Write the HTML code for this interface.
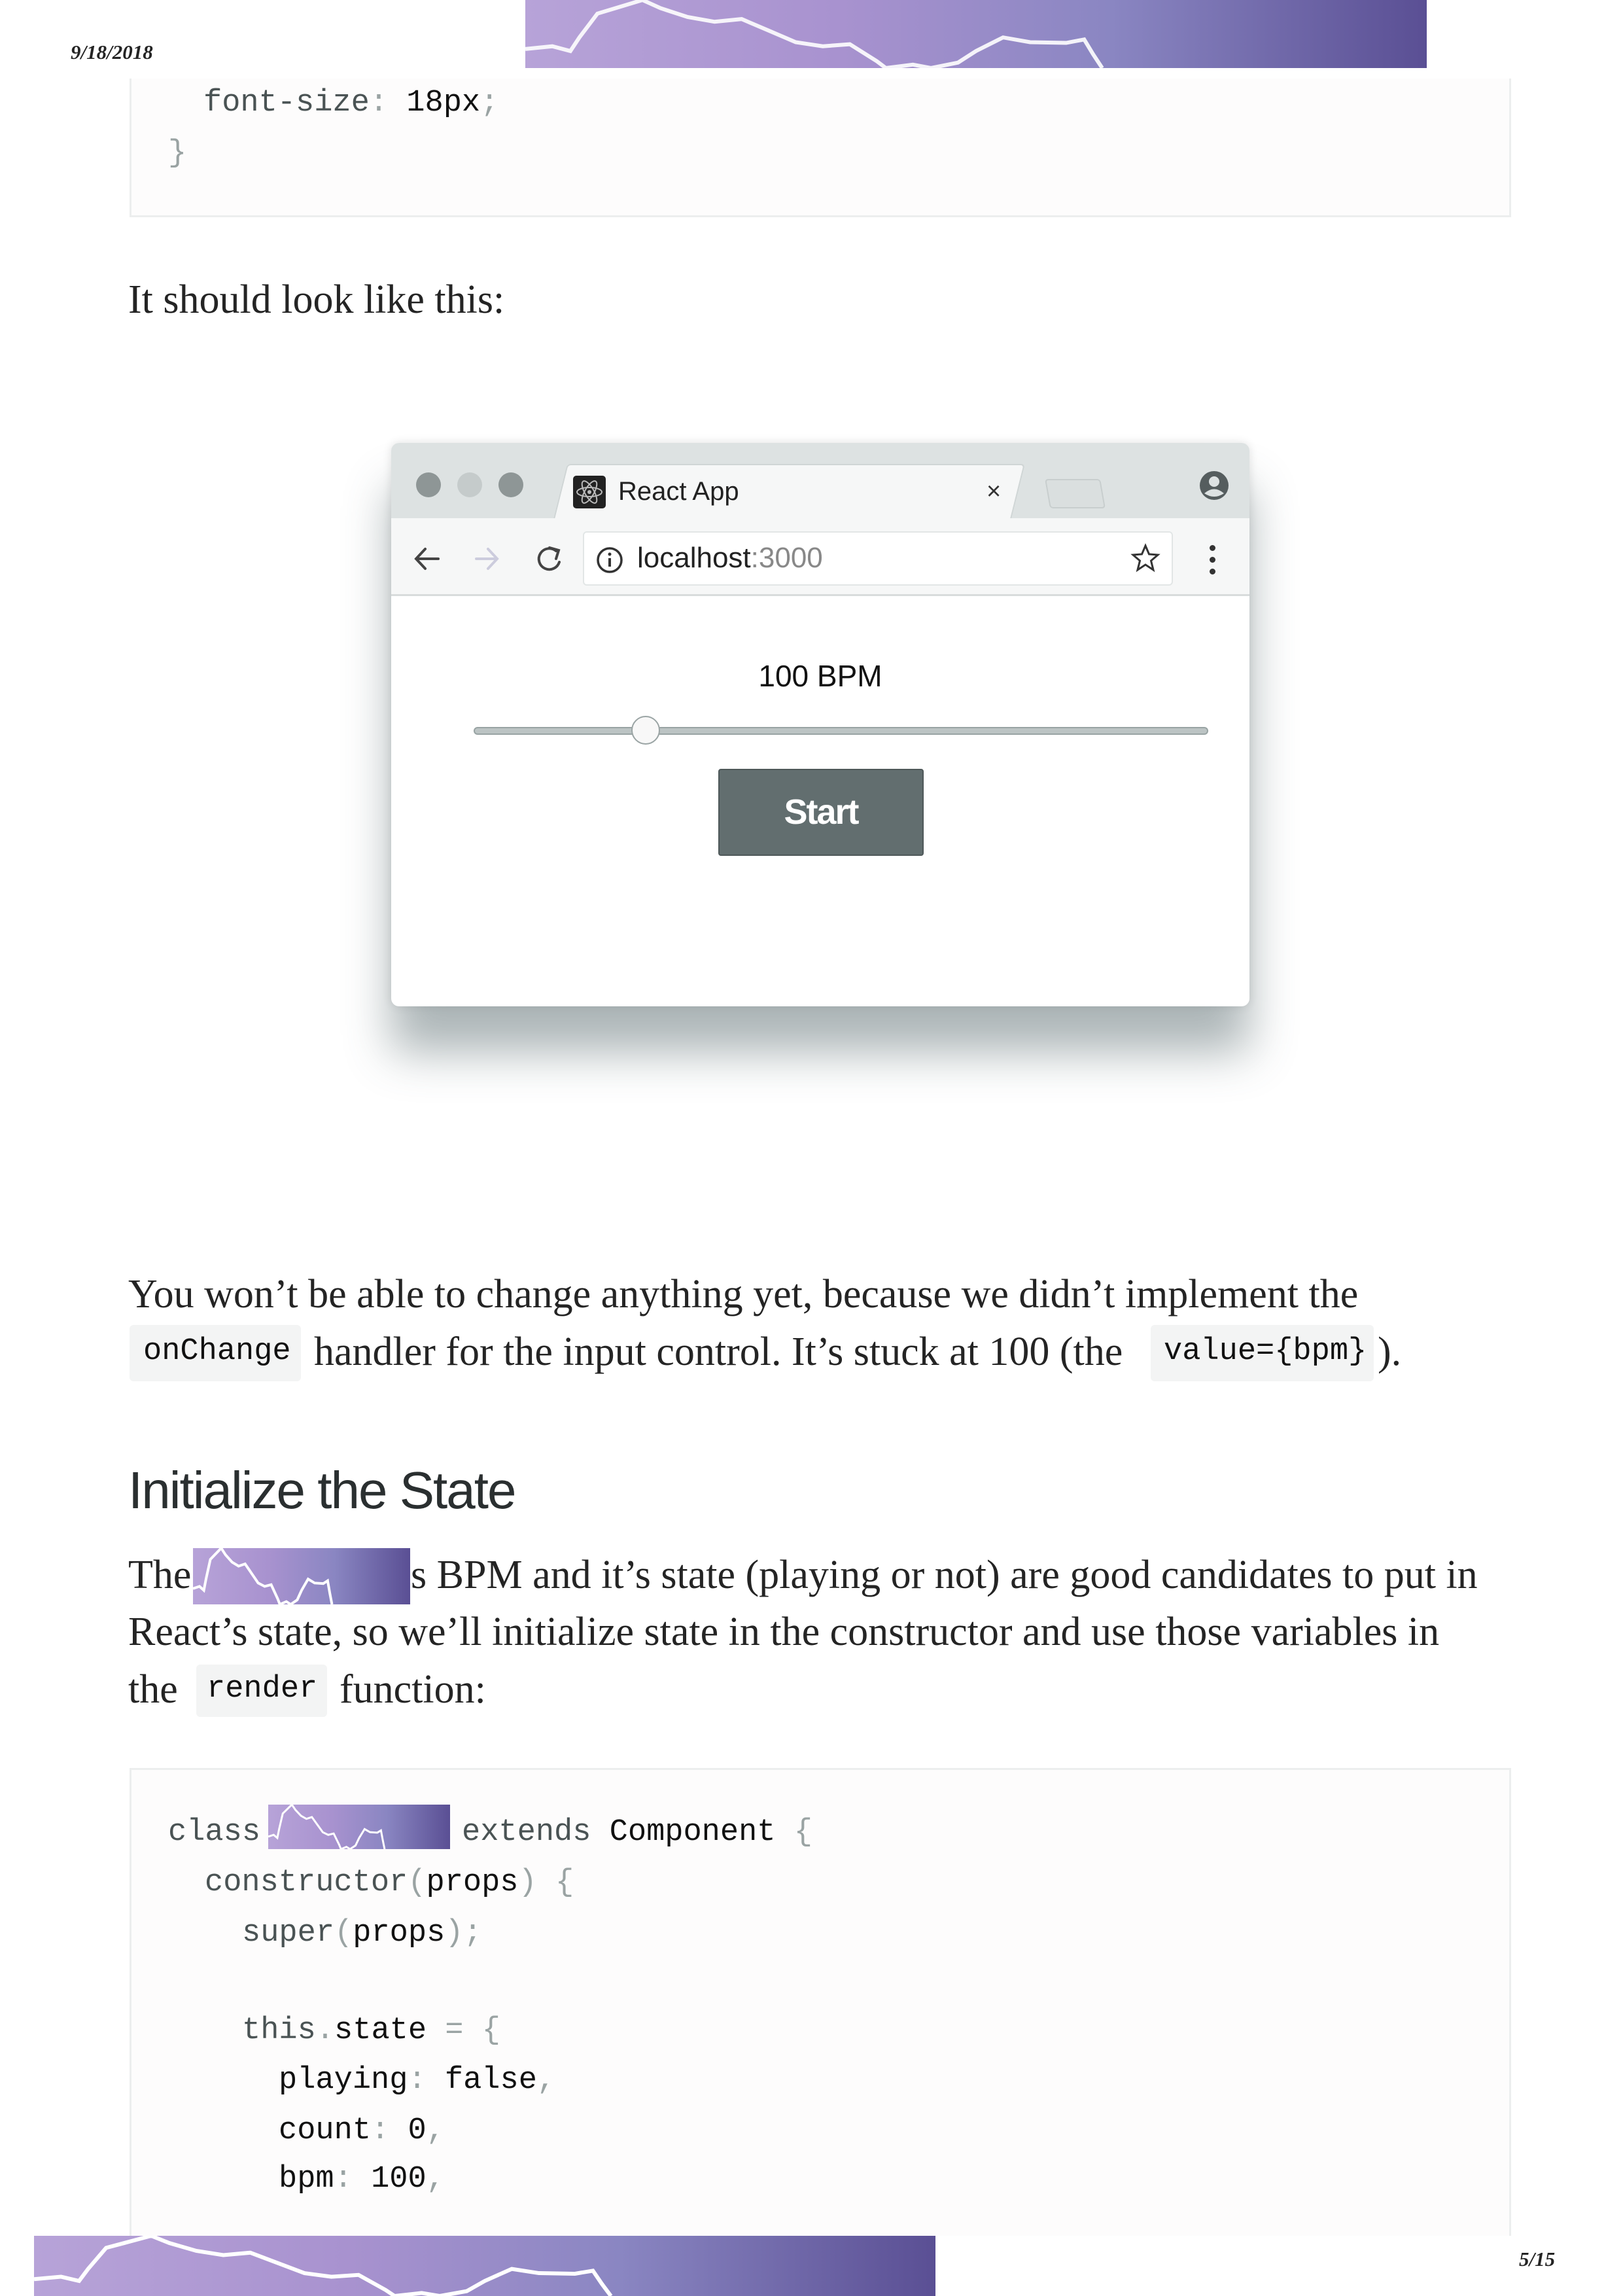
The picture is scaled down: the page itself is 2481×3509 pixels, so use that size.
<!DOCTYPE html>
<html><head><meta charset="utf-8"><style>
*{margin:0;padding:0;box-sizing:border-box}
html,body{width:2481px;height:3509px;overflow:hidden}
body{position:relative;background:#fff;font-family:"Liberation Serif",serif;color:#242424}
.a{position:absolute;white-space:nowrap;height:80px;line-height:80px}
.s{font-size:62px}
.m{font-family:"Liberation Mono",monospace;font-size:47px}
.k{color:#4a5354}.p{color:#9aa3a3}.b{color:#111}
.ic{position:absolute;background:#f3f4f4;border-radius:6px}
.ban{position:absolute;background:linear-gradient(90deg,#b7a3d8 0%,#a892cf 35%,#8a86c2 65%,#5a4f94 100%);overflow:hidden}
.ban svg{position:absolute;left:0;top:0;width:100%;height:100%}
</style></head><body>

<div class="ban" style="left:803px;top:0;width:1378px;height:104px"><svg viewBox="0 0 100 100" preserveAspectRatio="none"><polyline points="0,72 3,68 5,75 6,55 8,20 10,12 13,0 15,12 18,25 21,32 24,28 27,45 30,62 33,68 36,65 39,90 40,100 43,95 45,100 48,92 50,75 53,55 56,62 60,63 62,58 63,80 64,100" fill="none" stroke="#fff" vector-effect="non-scaling-stroke" style="stroke-width:6px;opacity:.9"/></svg></div>
<div class="a" style="left:108px;top:55px;font-size:31px;font-style:italic;font-weight:bold;height:50px;line-height:50px">9/18/2018</div>

<div style="position:absolute;left:198px;top:120px;width:2112px;height:212px;background:#fdfcfc;border:3px solid #eceeee;border-top:none"></div>
<div class="a m" style="left:311px;top:118px"><span class="k">font-size</span><span class="p">:</span> <span class="b">18px</span><span class="p">;</span></div>
<div class="a m p" style="left:257px;top:195px">}</div>

<div class="a s" style="left:196px;top:418px">It should look like this:</div>

<!-- browser -->
<div style="position:absolute;left:598px;top:677px;width:1312px;height:861px;border-radius:12px;background:#fff;box-shadow:0 70px 70px rgba(70,90,95,.45),0 0 14px rgba(0,0,0,.12);overflow:hidden">
 <div style="position:absolute;left:0;top:0;width:1312px;height:117px;background:#dde2e2"></div>
 <div style="position:absolute;left:0;top:117px;width:1312px;height:117px;background:#f6f7f7;border-bottom:3px solid #d8dcdc"></div>
 <div style="position:absolute;left:248px;top:32px;width:700px;height:88px;background:#f6f7f7;transform:skewX(-14deg) translateX(10px);border:2px solid #cfd5d5;border-bottom:none;border-radius:6px 6px 0 0"></div>
 <div style="position:absolute;left:0;top:115px;width:1312px;height:6px;background:#f6f7f7"></div>
 <div style="position:absolute;left:1003px;top:55px;width:85px;height:45px;background:#dadfdf;border:2px solid #c8cece;transform:skewX(10deg);border-radius:5px"></div>
 <div style="position:absolute;left:38px;top:45px;width:38px;height:38px;border-radius:50%;background:#8e9696"></div>
 <div style="position:absolute;left:101px;top:45px;width:38px;height:38px;border-radius:50%;background:#c5cbcb"></div>
 <div style="position:absolute;left:164px;top:45px;width:38px;height:38px;border-radius:50%;background:#8e9696"></div>
 <div style="position:absolute;left:278px;top:50px;width:50px;height:50px;border-radius:5px;background:#222"><svg viewBox="0 0 50 50" width="50" height="50"><g fill="none" stroke="#bbb" stroke-width="2"><ellipse cx="25" cy="25" rx="19" ry="7"/><ellipse cx="25" cy="25" rx="19" ry="7" transform="rotate(60 25 25)"/><ellipse cx="25" cy="25" rx="19" ry="7" transform="rotate(-60 25 25)"/></g><circle cx="25" cy="25" r="3" fill="#bbb"/></svg></div>
 <div class="a" style="left:347px;top:34px;font-family:'Liberation Sans',sans-serif;font-size:40px;color:#222">React App</div>
 <div class="a" style="left:910px;top:34px;font-family:'Liberation Sans',sans-serif;font-size:38px;color:#333">×</div>
 <svg style="position:absolute;left:1233px;top:40px" width="50" height="50" viewBox="0 0 50 50"><circle cx="25" cy="25" r="22" fill="#555d5e"/><circle cx="25" cy="19" r="8" fill="#dde2e2"/><path d="M10 37 Q25 24 40 37 Q25 47 10 37Z" fill="#dde2e2"/></svg>
 <svg style="position:absolute;left:30px;top:152px" width="320" height="50" viewBox="0 0 320 50"><g fill="none" stroke-width="4" stroke-linecap="round"><path d="M42 25H8M22 10L8 25L22 40" stroke="#444"/><path d="M132 25H100M118 10L132 25L118 40" stroke="#ccd"/><path d="M222 13A16 16 0 1 0 227 30" stroke="#444"/><path d="M212 8L226 12L222 25" stroke="#444"/></g></svg>
 <div style="position:absolute;left:293px;top:135px;width:902px;height:83px;background:#fff;border:2px solid #e2e6e6;border-radius:6px"></div>
 <svg style="position:absolute;left:312px;top:157px" width="44" height="44" viewBox="0 0 44 44"><circle cx="22" cy="22" r="18" fill="none" stroke="#333" stroke-width="3.5"/><rect x="20" y="19" width="4" height="13" fill="#333"/><circle cx="22" cy="13" r="2.5" fill="#333"/></svg>
 <div class="a" style="left:376px;top:136px;font-family:'Liberation Sans',sans-serif;font-size:44px;color:#222">localhost<span style="color:#888">:3000</span></div>
 <svg style="position:absolute;left:1130px;top:153px" width="46" height="46" viewBox="0 0 46 46"><path d="M23 4L28.5 17L42 18L31.5 27L35 41L23 33L11 41L14.5 27L4 18L17.5 17Z" fill="none" stroke="#333" stroke-width="3"/></svg>
 <div style="position:absolute;left:1251px;top:156px;width:9px;height:9px;border-radius:50%;background:#333;box-shadow:0 18px 0 #333,0 36px 0 #333"></div>
 <div class="a" style="left:0;width:1312px;text-align:center;top:316px;font-family:'Liberation Sans',sans-serif;font-size:46px;color:#111">100 BPM</div>
 <div style="position:absolute;left:126px;top:434px;width:1123px;height:12px;border-radius:6px;background:#bcc4c4;border:2px solid #98a3a3"></div>
 <div style="position:absolute;left:367px;top:417px;width:44px;height:44px;border-radius:50%;background:#f8f8f8;border:2px solid #9aa4a4"></div>
 <div style="position:absolute;left:500px;top:498px;width:314px;height:133px;background:#626e6f;border:2px solid #4e5859;border-radius:4px;color:#fff;font-family:'Liberation Sans',sans-serif;font-size:54px;font-weight:bold;letter-spacing:-2px;text-align:center;line-height:129px">Start</div>
</div>

<div class="a s" style="left:196px;top:1938px">You won’t be able to change anything yet, because we didn’t implement the</div>
<div class="ic" style="left:198px;top:2025px;width:262px;height:86px"></div>
<div class="a m b" style="left:219px;top:2026px">onChange</div>
<div class="a s" style="left:480px;top:2026px">handler for the input control. It’s stuck at 100 (the</div>
<div class="ic" style="left:1759px;top:2025px;width:341px;height:86px"></div>
<div class="a m b" style="left:1779px;top:2026px">value={bpm}</div>
<div class="a s" style="left:2106px;top:2026px">).</div>

<div class="a" style="left:196px;top:2233px;height:90px;line-height:90px;font-family:'Liberation Sans',sans-serif;font-size:80px;color:#2a2f30;letter-spacing:-2px">Initialize the State</div>

<div class="a s" style="left:196px;top:2367px">The</div>
<div class="a s" style="left:628px;top:2367px">s BPM and it’s state (playing or not) are good candidates to put in</div>
<div class="ban" style="left:295px;top:2366px;width:332px;height:86px"><svg viewBox="0 0 100 100" preserveAspectRatio="none"><polyline points="0,72 3,68 5,75 6,55 8,20 10,12 13,0 15,12 18,25 21,32 24,28 27,45 30,62 33,68 36,65 39,90 40,100 43,95 45,100 48,92 50,75 53,55 56,62 60,63 62,58 63,80 64,100" fill="none" stroke="#fff" vector-effect="non-scaling-stroke" style="stroke-width:4px"/></svg></div>
<div class="a s" style="left:196px;top:2454px">React’s state, so we’ll initialize state in the constructor and use those variables in</div>
<div class="a s" style="left:196px;top:2542px">the</div>
<div class="ic" style="left:300px;top:2544px;width:200px;height:80px"></div>
<div class="a m b" style="left:316px;top:2542px">render</div>
<div class="a s" style="left:519px;top:2542px">function:</div>

<div style="position:absolute;left:198px;top:2702px;width:2112px;height:807px;background:#fdfcfc;border:3px solid #eceeee;border-bottom:none"></div>
<div class="a m" style="left:257px;top:2761px"><span class="k">class</span></div>
<div class="ban" style="left:410px;top:2758px;width:278px;height:68px"><svg viewBox="0 0 100 100" preserveAspectRatio="none"><polyline points="0,72 3,68 5,75 6,55 8,20 10,12 13,0 15,12 18,25 21,32 24,28 27,45 30,62 33,68 36,65 39,90 40,100 43,95 45,100 48,92 50,75 53,55 56,62 60,63 62,58 63,80 64,100" fill="none" stroke="#fff" vector-effect="non-scaling-stroke" style="stroke-width:3px"/></svg></div>
<div class="a m" style="left:706px;top:2761px"><span class="k">extends</span> <span class="b">Component</span> <span class="p">{</span></div>
<div class="a m" style="left:313px;top:2838px"><span class="k">constructor</span><span class="p">(</span><span class="b">props</span><span class="p">)</span> <span class="p">{</span></div>
<div class="a m" style="left:370px;top:2915px"><span class="k">super</span><span class="p">(</span><span class="b">props</span><span class="p">);</span></div>
<div class="a m" style="left:370px;top:3064px"><span class="k">this</span><span class="p">.</span><span class="b">state</span> <span class="p">=</span> <span class="p">{</span></div>
<div class="a m" style="left:426px;top:3140px"><span class="b">playing</span><span class="p">:</span> <span class="b">false</span><span class="p">,</span></div>
<div class="a m" style="left:426px;top:3217px"><span class="b">count</span><span class="p">:</span> <span class="b">0</span><span class="p">,</span></div>
<div class="a m" style="left:426px;top:3291px"><span class="b">bpm</span><span class="p">:</span> <span class="b">100</span><span class="p">,</span></div>

<div style="position:absolute;left:0;top:3417px;width:2481px;height:92px;background:#fff"></div>
<div class="ban" style="left:52px;top:3417px;width:1378px;height:92px"><svg viewBox="0 0 100 100" preserveAspectRatio="none"><polyline points="0,72 3,68 5,75 6,55 8,20 10,12 13,0 15,12 18,25 21,32 24,28 27,45 30,62 33,68 36,65 39,90 40,100 43,95 45,100 48,92 50,75 53,55 56,62 60,63 62,58 63,80 64,100" fill="none" stroke="#fff" vector-effect="non-scaling-stroke" style="stroke-width:6px"/></svg></div>
<div class="a" style="left:2322px;top:3428px;font-size:31px;font-style:italic;font-weight:bold;height:50px;line-height:50px">5/15</div>
</body></html>
